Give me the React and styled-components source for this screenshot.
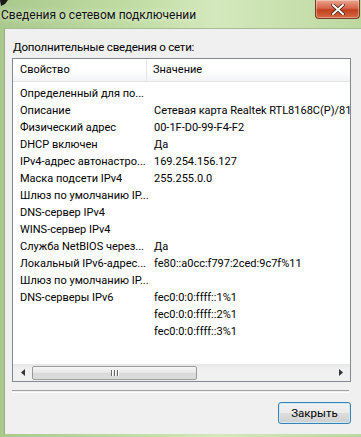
import styled, { createGlobalStyle } from 'styled-components';

// Global page reset
const GlobalStyle = createGlobalStyle`
  html, body {
    margin: 0;
    padding: 0;
    background: #f0f0f0;
  }
  body {
    font-family: Roboto, 'Liberation Sans', Arial, sans-serif;
    font-size: 11px;
    color: #000;
  }
`;

// Styled components
const Window = styled.div`
  width: 361px;
  height: 437px;
  display: flex;
  flex-direction: column;
  background: linear-gradient(90deg, #a9c98c 0%, #c3dea6 40%, #d4e8bd 60%, #bcd89f 100%);
  overflow: hidden;
`;

const TitleBar = styled.div`
  height: 28px;
  flex: none;
  display: flex;
  justify-content: space-between;
  align-items: flex-start;
  position: relative;
`;

const CursorMark = styled.svg`
  position: absolute;
  left: 0;
  top: 0;
`;

const Title = styled.span`
  margin-top: 8px;
  padding-left: 1px;
  font-size: 12px;
  color: #111;
  text-shadow: 0 0 6px rgba(255, 255, 255, 0.9);
`;

const CloseButton = styled.div`
  width: 43px;
  height: 18px;
  margin-right: 1px;
  border: 1px solid #7a3a2a;
  border-top: none;
  border-radius: 0 0 4px 4px;
  background: linear-gradient(180deg, #e9a590 0%, #d8664a 45%, #c3401f 55%, #d46a44 100%);
  display: flex;
  align-items: center;
  justify-content: center;
  box-shadow: inset 0 0 0 1px rgba(255, 255, 255, 0.35);
`;

const Body = styled.div`
  flex: 1;
  margin: 0 0 3px 4px;
  background: #f0f0f0;
  border-left: 1px solid #98ae88;
  border-top: 1px solid #a6bd94;
  display: flex;
  flex-direction: column;
  padding: 11px 10px 0 7px;
`;

const Caption = styled.div`
  font-size: 11.5px;
  letter-spacing: -0.2px;
  line-height: 14px;
  height: 14px;
  padding-left: 1px;
`;

const ListBox = styled.div`
  margin-top: 4px;
  height: 322px;
  background: #fff;
  border: 1px solid #828790;
  display: flex;
  flex-direction: column;
  overflow: hidden;
`;

const HeaderRow = styled.div`
  height: 22px;
  flex: none;
  display: flex;
  background: linear-gradient(180deg, #ffffff 0%, #ffffff 50%, #f3f4f6 100%);
  border-bottom: 1px solid #e5e5e5;
`;

const HeaderCell = styled.div`
  width: ${(p) => (p.$first ? '134px' : 'auto')};
  flex: ${(p) => (p.$first ? 'none' : '1')};
  padding-left: ${(p) => (p.$first ? '7px' : '6px')};
  line-height: 22px;
  border-right: ${(p) => (p.$first ? '1px solid #e5e5e5' : 'none')};
  box-sizing: border-box;
`;

const Rows = styled.div`
  flex: 1;
  padding-top: 3px;
  overflow: hidden;
`;

const Row = styled.div`
  height: 17px;
  display: flex;
  line-height: 17px;
  white-space: nowrap;
`;

const Cell = styled.div`
  overflow: hidden;
  white-space: nowrap;
  box-sizing: border-box;
  width: ${(p) => (p.$first ? '135px' : 'auto')};
  flex: ${(p) => (p.$first ? 'none' : '1')};
  padding-left: ${(p) => (p.$first ? '7px' : '6px')};
`;

const ScrollBar = styled.div`
  height: 17px;
  flex: none;
  display: flex;
  align-items: center;
  background: linear-gradient(180deg, #e6e6e6 0%, #f0f0f0 30%, #f0f0f0 100%);
  padding: 0 1px;
`;

const Arrow = styled.div`
  width: 17px;
  height: 17px;
  flex: none;
  display: flex;
  align-items: center;
  justify-content: center;
`;

const Track = styled.div`
  flex: 1;
  height: 17px;
  display: flex;
  align-items: center;
`;

const Thumb = styled.div`
  width: 165px;
  height: 14px;
  margin-left: 1px;
  border: 1px solid #9a9a9a;
  border-radius: 2px;
  background: linear-gradient(180deg, #f6f6f6 0%, #e6e6e6 50%, #d9d9d9 51%, #dcdcdc 100%);
  display: flex;
  align-items: center;
  justify-content: center;
  box-sizing: border-box;
  gap: 2px;
`;

const Grip = styled.span`
  width: 1px;
  height: 6px;
  background: #6a6a6a;
  box-shadow: 1px 0 0 #fff;
`;

const Separator = styled.div`
  margin-top: 8px;
  margin-right: 2px;
  height: 1px;
  border-top: 1px solid #a0a0a0;
  border-bottom: 1px solid #fff;
`;

const Footer = styled.div`
  display: flex;
  justify-content: flex-end;
  padding-top: 9px;
`;

const Button = styled.button`
  width: 73px;
  height: 22px;
  margin-right: 0;
  font-family: Roboto, 'Liberation Sans', Arial, sans-serif;
  font-size: 11.5px;
  color: #000;
  border: 1px solid #3c7fb1;
  border-radius: 3px;
  background: linear-gradient(180deg, #f2f2f2 0%, #ebebeb 48%, #dddddd 52%, #cfcfcf 100%);
  box-shadow: inset 0 0 0 1px #c9ecfb;
  padding: 0;
`;

const rows = [
  ['Определенный для по...', ''],
  ['Описание', 'Сетевая карта Realtek RTL8168C(P)/8111C(P)'],
  ['Физический адрес', '00-1F-D0-99-F4-F2'],
  ['DHCP включен', 'Да'],
  ['IPv4-адрес автонастро...', '169.254.156.127'],
  ['Маска подсети IPv4', '255.255.0.0'],
  ['Шлюз по умолчанию IP...', ''],
  ['DNS-сервер IPv4', ''],
  ['WINS-сервер IPv4', ''],
  ['Служба NetBIOS через...', 'Да'],
  ['Локальный IPv6-адрес...', 'fe80::a0cc:f797:2ced:9c7f%11'],
  ['Шлюз по умолчанию IP...', ''],
  ['DNS-серверы IPv6', 'fec0:0:0:ffff::1%1'],
  ['', 'fec0:0:0:ffff::2%1'],
  ['', 'fec0:0:0:ffff::3%1'],
];

const App = () => {
  return (
    <Window>
      <GlobalStyle />
      <TitleBar>
        <CursorMark width="9" height="7" viewBox="0 0 9 7">
          <path d="M0 0 L8 0 L5 4 L1 6 Z" fill="#1a1a1a" />
        </CursorMark>
        <Title>Сведения о сетевом подключении</Title>
        <CloseButton>
          <svg width="14" height="11" viewBox="0 0 14 11">
            <path
              d="M2 1 L12 10 M12 1 L2 10"
              stroke="#3a1a10"
              strokeWidth="3.4"
              strokeLinecap="round"
            />
            <path
              d="M2 1 L12 10 M12 1 L2 10"
              stroke="#fff"
              strokeWidth="2"
              strokeLinecap="round"
            />
          </svg>
        </CloseButton>
      </TitleBar>
      <Body>
        <Caption>Дополнительные сведения о сети:</Caption>
        <ListBox>
          <HeaderRow>
            <HeaderCell $first>Свойство</HeaderCell>
            <HeaderCell>Значение</HeaderCell>
          </HeaderRow>
          <Rows>
            {rows.map(([name, value], i) => (
              <Row key={i}>
                <Cell $first>{name}</Cell>
                <Cell>{value}</Cell>
              </Row>
            ))}
          </Rows>
          <ScrollBar>
            <Arrow>
              <svg width="4" height="7" viewBox="0 0 4 7">
                <path d="M4 0 L0 3.5 L4 7 Z" fill="#333" />
              </svg>
            </Arrow>
            <Track>
              <Thumb>
                <Grip />
                <Grip />
                <Grip />
              </Thumb>
            </Track>
            <Arrow>
              <svg width="4" height="7" viewBox="0 0 4 7">
                <path d="M0 0 L4 3.5 L0 7 Z" fill="#333" />
              </svg>
            </Arrow>
          </ScrollBar>
        </ListBox>
        <Separator />
        <Footer>
          <Button>Закрыть</Button>
        </Footer>
      </Body>
    </Window>
  );
};

export default App;
